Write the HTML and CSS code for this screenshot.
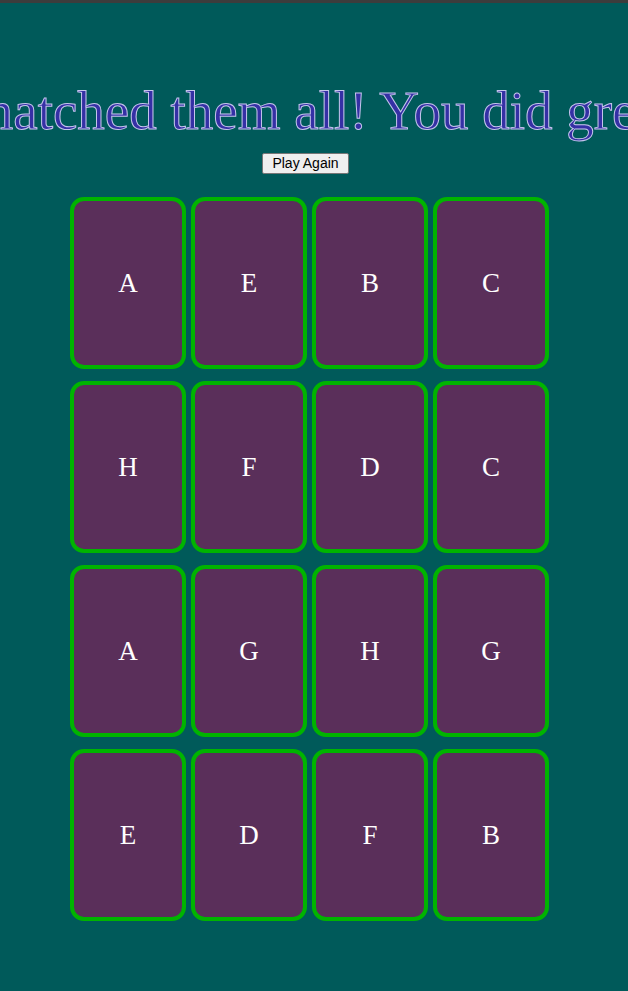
FILE: index.html
```html
<!DOCTYPE html>
<html lang="en">
<head>
<meta charset="utf-8">
<title>Memory Game</title>
<link rel="stylesheet" href="styles.css">
</head>
<body>
<div class="topbar"></div>
<main class="game">
  <h1 class="title">You matched them all! You did great!</h1>
  <button class="again" type="button">Play Again</button>
  <div class="board">
    <div class="card">A</div>
    <div class="card">E</div>
    <div class="card">B</div>
    <div class="card">C</div>
    <div class="card">H</div>
    <div class="card">F</div>
    <div class="card">D</div>
    <div class="card">C</div>
    <div class="card">A</div>
    <div class="card">G</div>
    <div class="card">H</div>
    <div class="card">G</div>
    <div class="card">E</div>
    <div class="card">D</div>
    <div class="card">F</div>
    <div class="card">B</div>
  </div>
</main>
</body>
</html>
```
FILE: styles.css
```css
html, body {
  margin: 0;
  padding: 0;
  background: #005a5a;
  min-height: 100%;
}
.topbar {
  height: 3px;
  background: #3c3c3c;
}
.game {
  display: flex;
  flex-direction: column;
  align-items: center;
  padding-right: 9px;
  padding-bottom: 40px;
}
.title {
  margin: 78px 57px 0 0;
  white-space: nowrap;
  font-family: "Liberation Serif", "Times New Roman", serif;
  font-weight: normal;
  font-size: 55px;
  line-height: 60px;
  color: #3530a5;
  -webkit-text-stroke: 1px #c4c4ec;
}
.again {
  margin: 12px 8px 0 0;
  padding: 1px 9px;
  font-family: "Liberation Sans", Arial, sans-serif;
  font-size: 14px;
  line-height: 17px;
  color: #000;
  background: #efefef;
  border: 1px solid #767676;
  border-radius: 2px;
}
.board {
  margin-top: 23px;
  display: grid;
  grid-template-columns: repeat(4, 116px);
  grid-auto-rows: 172px;
  column-gap: 5px;
  row-gap: 12px;
}
.card {
  box-sizing: border-box;
  display: flex;
  align-items: center;
  justify-content: center;
  background: #5a2f5a;
  border: 4px solid #00b400;
  border-radius: 14px;
  color: #fff;
  font-family: "Liberation Serif", "Times New Roman", serif;
  font-size: 27px;
}
```
